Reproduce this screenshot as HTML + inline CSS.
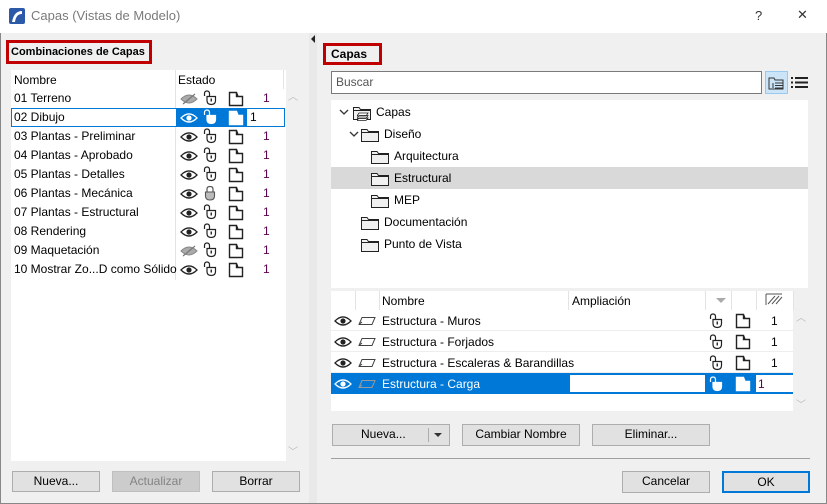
<!DOCTYPE html>
<html><head><meta charset="utf-8"><style>
*{box-sizing:border-box;margin:0;padding:0}
body{width:827px;height:504px;position:relative;background:#f0f0f0;font-family:"Liberation Sans",sans-serif;font-size:12px;color:#000;overflow:hidden}
.a{position:absolute}
.btn{position:absolute;background:#e1e1e1;border:1px solid #adadad;text-align:center;line-height:19px;font-size:12px}
.t{position:absolute;white-space:nowrap}
.row{position:absolute;height:19px;line-height:19px}
.num{color:#5a0050}
</style></head><body>
<svg width="0" height="0" style="position:absolute">
<defs>
<symbol id="eye" viewBox="0 0 18 12"><path d="M1 6 Q9 -2 17 6 Q9 14 1 6Z" fill="none" stroke="currentColor" stroke-width="1.3"/><circle cx="9" cy="6" r="2.6" fill="currentColor"/></symbol>
<symbol id="eyeoff" viewBox="0 0 18 12"><path d="M1 6 Q9 -2 17 6 Q9 14 1 6Z" fill="#aaa" stroke="#888" stroke-width="1"/><path d="M3 11 L15 1" stroke="#777" stroke-width="1.2"/></symbol>
<symbol id="lock" viewBox="0 0 14 16"><path d="M1.5 6 V3.5 Q1.5 1 4 1 Q6.5 1 6.5 3.5 V6" fill="none" stroke="currentColor" stroke-width="1.2"/><path d="M4 6.5 H12.5 V10.5 Q12.5 14.5 8.25 14.5 Q4 14.5 4 10.5Z" fill="#fff" stroke="currentColor" stroke-width="1.2"/><path d="M8.25 8.5 V11.5" stroke="currentColor" stroke-width="1.4"/></symbol>
<symbol id="lockc" viewBox="0 0 14 16"><path d="M4 7 V4 Q4 1.5 7 1.5 Q10 1.5 10 4 V7" fill="none" stroke="#555" stroke-width="1.2"/><path d="M2.5 7 H11.5 V11 Q11.5 15 7 15 Q2.5 15 2.5 11Z" fill="#bbb" stroke="#555" stroke-width="1.1"/></symbol>
<symbol id="pg" viewBox="0 0 16 16"><path d="M1.5 1.5 H8.5 L10 5.5 H14.5 V14.5 H1.5Z M8.5 1.5 V5.5 H10" fill="#fff" stroke="currentColor" stroke-width="1.4" stroke-linejoin="miter"/></symbol>
<symbol id="fold" viewBox="0 0 20 16"><path d="M1.5 2.5 H7 L8.5 4.5 H18.5 V14.5 H1.5Z M1.5 5.5 H18.5" fill="#f0f0f0" stroke="#222" stroke-width="1"/></symbol>
<symbol id="plane" viewBox="0 0 18 10"><path d="M4 1.5 H17 L14 8.5 H1Z M1 8.5 L4 6" fill="none" stroke="currentColor" stroke-width="1"/></symbol>
</defs></svg>

<div class="a" style="left:0;top:0;width:827px;height:33px;background:#fff"></div>
<svg class="a" style="left:9px;top:8px" width="16" height="16"><rect width="16" height="16" rx="2" fill="#2c5aa8"/><path d="M3 14 Q5 3 13 3 V6 Q7 6 6 14Z" fill="#fff"/></svg>
<div class="t" style="left:31px;top:8px;font-size:13px;color:#7a7a7a">Capas (Vistas de Modelo)</div>
<div class="t" style="left:755px;top:8px;font-size:13px;color:#333">?</div>
<div class="t" style="left:797px;top:7px;font-size:13px;color:#333">✕</div>
<div class="a" style="left:0;top:33px;width:1px;height:471px;background:#888"></div>
<div class="a" style="left:826px;top:33px;width:1px;height:471px;background:#888"></div>
<div class="a" style="left:0;top:503px;width:827px;height:1px;background:#888"></div>

<div class="a" style="left:309px;top:33px;width:8px;height:470px;background:#e9e9e9"></div>
<div class="a" style="left:311px;top:35px;width:0;height:0;border-top:4px solid transparent;border-bottom:4px solid transparent;border-right:4px solid #222"></div>

<div class="a" style="left:6px;top:40px;width:146px;height:24px;border:3px solid #c00000"></div>
<div class="t" style="left:11px;top:46px;font-weight:bold;font-size:11px">Combinaciones de Capas</div>
<div class="a" style="left:11px;top:70px;width:275px;height:391px;background:#fff"></div>
<div class="a" style="left:286px;top:70px;width:13px;height:391px;background:#f0f0f0"></div>
<div class="t" style="left:288px;top:88px;color:#bbb;font-size:10px">︿</div>
<div class="t" style="left:288px;top:443px;color:#bbb;font-size:10px">﹀</div>
<div class="a" style="left:175px;top:70px;width:1px;height:210px;background:#e3e3e3"></div>
<div class="a" style="left:283px;top:70px;width:1px;height:19px;background:#e3e3e3"></div>
<div class="t" style="left:14px;top:73px">Nombre</div>
<div class="t" style="left:178px;top:73px">Estado</div>
<div id="lrows"></div>

<div class="btn" style="left:12px;top:471px;width:88px;height:21px">Nueva...</div>
<div class="btn" style="left:112px;top:471px;width:88px;height:21px;background:#cccccc;border-color:#bfbfbf;color:#838383">Actualizar</div>
<div class="btn" style="left:212px;top:471px;width:88px;height:21px">Borrar</div>

<div class="a" style="left:323px;top:43px;width:59px;height:22px;border:3px solid #c00000"></div>
<div class="t" style="left:331px;top:47px;font-weight:bold">Capas</div>
<div class="a" style="left:331px;top:71px;width:431px;height:23px;background:#fff;border:1px solid #7a7a7a"></div>
<div class="t" style="left:336px;top:75px;color:#555">Buscar</div>
<div class="a" style="left:765px;top:71px;width:23px;height:23px;background:#cce4f7;border:1px solid #99c9ef"></div>
<svg class="a" style="left:768px;top:75px" width="17" height="16"><path d="M1 3 H6 L7 5 H15 V14 H1Z" fill="none" stroke="#333"/><path d="M7 8 H15 M7 10.5 H15 M7 13 H15 M5 8 V13" stroke="#333"/></svg>
<svg class="a" style="left:791px;top:76px" width="17" height="14"><path d="M0 2 H2 M4 2 H17 M0 6.5 H2 M4 6.5 H17 M0 11 H2 M4 11 H17" stroke="#222" stroke-width="2"/></svg>

<div class="a" style="left:331px;top:100px;width:477px;height:188px;background:#fff"></div>
<div class="a" style="left:331px;top:167px;width:477px;height:22px;background:#d9d9d9"></div>
<div id="tree"></div>

<div class="a" style="left:331px;top:291px;width:462px;height:120px;background:#fff"></div>
<div id="rrows"></div>
<div class="t" style="left:796px;top:309px;color:#bbb;font-size:10px">︿</div>
<div class="t" style="left:796px;top:396px;color:#bbb;font-size:10px">﹀</div>

<div class="btn" style="left:332px;top:424px;width:118px;height:22px"><span style="position:absolute;left:28px">Nueva...</span><span style="position:absolute;left:95px;top:3px;width:1px;height:14px;background:#adadad"></span><span style="position:absolute;left:101px;top:8px;border-left:4px solid transparent;border-right:4px solid transparent;border-top:4px solid #333"></span></div>
<div class="btn" style="left:462px;top:424px;width:118px;height:22px">Cambiar Nombre</div>
<div class="btn" style="left:592px;top:424px;width:118px;height:22px">Eliminar...</div>
<div class="a" style="left:331px;top:458px;width:479px;height:1px;background:#a0a0a0"></div>
<div class="btn" style="left:622px;top:471px;width:88px;height:22px">Cancelar</div>
<div class="btn" style="left:722px;top:471px;width:88px;height:22px;border:2px solid #0078d7;line-height:18px">OK</div>

<script>
var L=["01 Terreno","02 Dibujo","03 Plantas - Preliminar","04 Plantas - Aprobado","05 Plantas - Detalles","06 Plantas - Mecánica","07 Plantas - Estructural","08 Rendering","09 Maquetación","10 Mostrar Zo...D como Sólido"];
var h="";
L.forEach(function(n,i){var y=89+i*19,s=i==1;
 var eye=(i==0||i==8)?'eyeoff':'eye';
 var lk=i==5?'lockc':'lock';
 if(s){h+='<div class="a" style="left:11px;top:'+y+'px;width:274px;height:19px;border:1px solid #0078d7;background:#fff"></div><div class="a" style="left:176px;top:'+(y+1)+'px;width:71px;height:17px;background:#0078d7"></div>';}
 h+='<div class="row" style="left:14px;top:'+y+'px">'+n+'</div>';
 var c=s?'#fff':'#222';
 h+='<svg class="a" style="left:180px;top:'+(y+4)+'px;color:'+c+'" width="18" height="12"><use href="#'+eye+'"/></svg>';
 h+='<svg class="a" style="left:203px;top:'+(y+1)+'px;color:'+c+'" width="14" height="16"><use href="#'+lk+'"/></svg>';
 h+='<svg class="a" style="left:228px;top:'+(y+2)+'px;color:'+c+'" width="16" height="16"><use href="#pg"/></svg>';
 h+=s?'<div class="row" style="left:250px;top:'+y+'px">1</div>':'<div class="row num" style="left:263px;top:'+y+'px">1</div>';
});
document.getElementById('lrows').innerHTML=h;

var T=[["Capas",0,1],["Diseño",1,1],["Arquitectura",2,0],["Estructural",2,0],["MEP",2,0],["Documentación",1,0],["Punto de Vista",1,0]];
h="";
T.forEach(function(t,i){var y=101+i*22,x=341+t[1]*10;
 if(t[2])h+='<svg class="a" style="left:'+(x-2)+'px;top:'+(y+7)+'px" width="10" height="8"><path d="M1 2 L5 6 L9 2" fill="none" stroke="#333" stroke-width="1.3"/></svg>';
 var fx; if(t[1]==2)fx=370; else if(t[1]==1)fx=360; else fx=352;
 h+='<svg class="a" style="left:'+fx+'px;top:'+(y+4)+'px" width="20" height="16"><use href="#fold"/></svg>';
 if(i==0)h+='<svg class="a" style="left:'+(fx+5)+'px;top:'+(y+10)+'px" width="12" height="10"><path d="M2 2 H11 L9 5 H0Z M2 4.5 H11 L9 7.5 H0Z M2 7 H11 L9 9.5 H0Z" fill="#fff" stroke="#222" stroke-width="0.8"/></svg>';
 h+='<div class="t" style="left:'+(fx+24)+'px;top:'+(y+4)+'px">'+t[0]+'</div>';
});
document.getElementById('tree').innerHTML=h;

h='';
[379,568,705,731,756,793].forEach(function(x){h+='<div class="a" style="left:'+x+'px;top:291px;width:1px;height:19px;background:#e3e3e3"></div>'});
h+='<div class="a" style="left:355px;top:291px;width:1px;height:19px;background:#e3e3e3"></div>';
h+='<div class="t" style="left:382px;top:294px">Nombre</div><div class="t" style="left:572px;top:294px">Ampliación</div>';
h+='<div class="a" style="left:716px;top:298px;border-left:5px solid transparent;border-right:5px solid transparent;border-top:5px solid #aaa"></div>';
h+='<svg class="a" style="left:765px;top:293px" width="18" height="12"><path d="M1 1 H17 M1 1 V12 M3 11 L10 3 M7 11 L14 3 M11 11 L17 4" stroke="#555" stroke-width="1"/></svg>';
var R=["Estructura - Muros","Estructura - Forjados","Estructura - Escaleras & Barandillas","Estructura - Carga"];
R.forEach(function(n,i){var y=310+i*21,s=i==3;
 if(s)h+='<div class="a" style="left:331px;top:'+y+'px;width:462px;height:21px;background:#0078d7"></div><div class="a" style="left:570px;top:'+(y+2)+'px;width:135px;height:17px;background:#fff"></div><div class="a" style="left:756px;top:'+(y+2)+'px;width:37px;height:17px;background:#fff"></div>';
 else h+='<div class="a" style="left:331px;top:'+(y+20)+'px;width:462px;height:1px;background:#eee"></div>';
 var c=s?'#fff':'#222';
 h+='<svg class="a" style="left:334px;top:'+(y+5)+'px;color:'+c+'" width="18" height="12"><use href="#eye"/></svg>';
 h+='<svg class="a" style="left:358px;top:'+(y+6)+'px;color:'+(s?'#999':'#444')+'" width="18" height="10"><use href="#plane"/></svg>';
 h+='<div class="t" style="left:382px;top:'+(y+4)+'px;color:'+(s?'#fff':'#000')+'">'+n+'</div>';
 h+='<svg class="a" style="left:709px;top:'+(y+3)+'px;color:'+c+'" width="14" height="16"><use href="#lock"/></svg>';
 h+='<svg class="a" style="left:735px;top:'+(y+3)+'px;color:'+c+'" width="16" height="16"><use href="#pg"/></svg>';
 h+='<div class="t '+(s?'num':'')+'" style="left:'+(s?758:771)+'px;top:'+(y+4)+'px">1</div>';
});
document.getElementById('rrows').innerHTML=h;
</script>
</body></html>
